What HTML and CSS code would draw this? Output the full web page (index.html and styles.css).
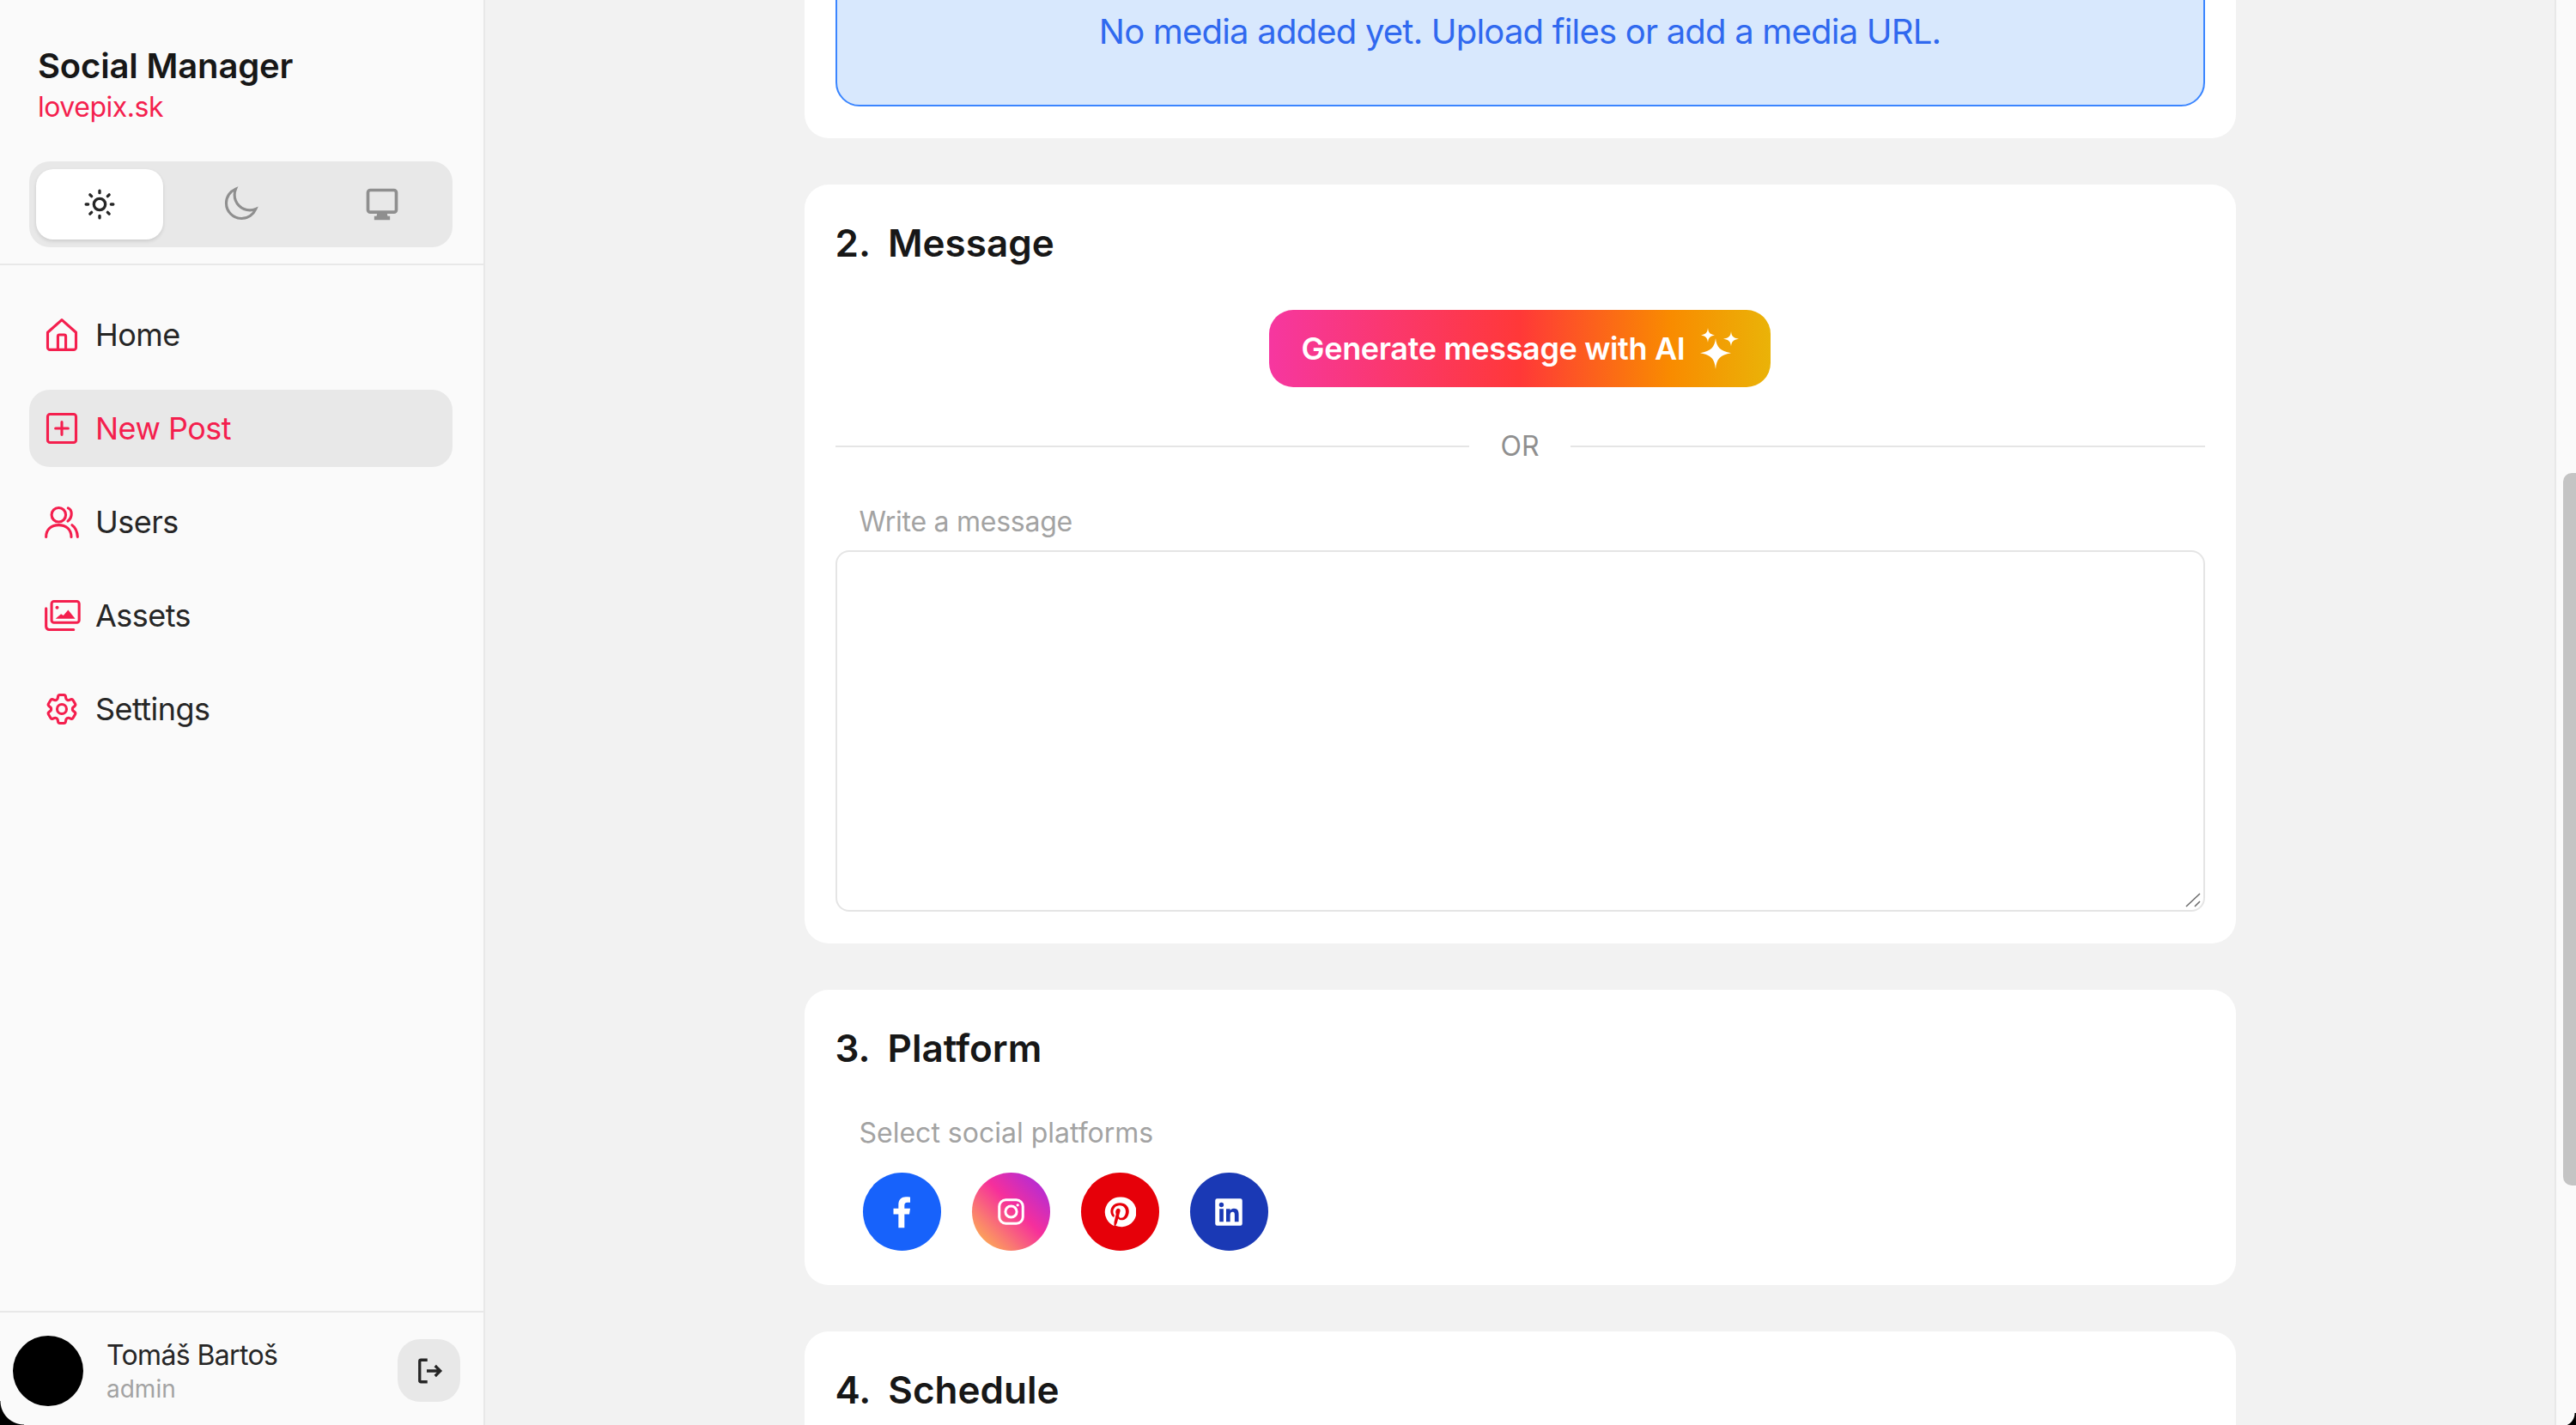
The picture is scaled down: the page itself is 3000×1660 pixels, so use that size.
FILE: index.html
```html
<!DOCTYPE html>
<html lang="en">
<head>
    <meta charset="UTF-8">
    <title>Social Manager</title>
    <link rel="stylesheet" href="styles.css">
</head>
<body>
    <div class="app">
        <!-- Sidebar -->
        <aside class="sidebar">
            <div class="brand">
                <div class="brand-name">Social Manager</div>
                <div class="brand-site">lovepix.sk</div>
            </div>
            <div class="theme-switch">
                <button class="theme-option active">
                    <svg viewBox="0 0 24 24" class="icon-theme"><circle cx="12" cy="12" r="4"/><path d="M12 2.500v1.500M12 20v1.500M2.500 12H4M20 12h1.500M5.300 5.300l1.100 1.100M17.600 17.600l1.100 1.100M5.300 18.700l1.100-1.100M17.600 6.400l1.100-1.100"/></svg>
                </button>
                <button class="theme-option">
                    <svg viewBox="0 0 24 24" class="icon-theme icon-moon"><path d="M21.752 15.002A9.72 9.72 0 0 1 18 15.750c-5.385 0-9.750-4.365-9.750-9.750 0-1.330.266-2.597.748-3.752A9.753 9.753 0 0 0 3 11.250C3 16.635 7.365 21 12.750 21a9.753 9.753 0 0 0 9.002-5.998z"/></svg>
                </button>
                <button class="theme-option">
                    <svg viewBox="0 0 24 24" class="icon-theme icon-screen"><rect x="3" y="3" width="18" height="14" rx="1.500"/><path class="solid" d="M9 17h6l.5 2.500h1.500V22H7v-2.500h1.500z"/></svg>
                </button>
            </div>
            <nav class="nav">
                <a class="nav-item">
                    <svg viewBox="0 0 24 24" class="icon-nav"><path d="M3 10.500L12 2.500l9 8V20a1.500 1.500 0 0 1-1.500 1.500h-15A1.500 1.500 0 0 1 3 20z"/><path d="M9.500 21.500V13a1 1 0 0 1 1-1h3a1 1 0 0 1 1 1v8.500"/></svg>
                    <span>Home</span>
                </a>
                <a class="nav-item active">
                    <svg viewBox="0 0 24 24" class="icon-nav"><rect x="3" y="3" width="18" height="18" rx="1.500"/><path d="M12 8v8M8 12h8"/></svg>
                    <span>New Post</span>
                </a>
                <a class="nav-item">
                    <svg viewBox="0 0 24 24" class="icon-nav"><circle cx="10" cy="7.500" r="4.500"/><path d="M2 21.500c0-5 3.500-7.500 8-7.500s8 2.500 8 7.500"/><path d="M16 3.200c2.500 1 3.200 5.500-.2 8.300M18.500 14c2.200 1.500 3.300 4 3.500 7.500"/></svg>
                    <span>Users</span>
                </a>
                <a class="nav-item">
                    <svg viewBox="0 0 24 24" class="icon-nav"><rect x="5.500" y="3" width="17.500" height="13.500" rx="1.500"/><path d="M2 7.500V19a2 2 0 0 0 2 2h15.500"/><circle class="solid" cx="9" cy="7" r="1.100"/><path class="solid" d="M8 14l3.500-3 1.500 1 3-3.500 4.500 5.500z"/></svg>
                    <span>Assets</span>
                </a>
                <a class="nav-item">
                    <svg viewBox="0 0 24 24" class="icon-nav"><path d="M9.594 3.940c.09-.542.56-.94 1.110-.94h2.593c.55 0 1.020.398 1.110.94l.213 1.281c.063.374.313.686.645.870.074.04.147.083.22.127.325.196.72.257 1.075.124l1.217-.456a1.125 1.125 0 0 1 1.370.49l1.296 2.247a1.125 1.125 0 0 1-.26 1.431l-1.003.827c-.293.241-.438.613-.43.992a7.723 7.723 0 0 1 0 .255c-.008.378.137.75.43.991l1.004.827c.424.35.534.955.26 1.430l-1.298 2.247a1.125 1.125 0 0 1-1.369.491l-1.217-.456c-.355-.133-.75-.072-1.076.124a6.470 6.470 0 0 1-.22.128c-.331.183-.581.495-.644.869l-.213 1.281c-.09.543-.56.94-1.110.94h-2.594c-.55 0-1.019-.398-1.110-.94l-.213-1.281c-.062-.374-.312-.686-.644-.870a6.520 6.520 0 0 1-.22-.127c-.325-.196-.72-.257-1.076-.124l-1.217.456a1.125 1.125 0 0 1-1.369-.49l-1.297-2.247a1.125 1.125 0 0 1 .26-1.431l1.004-.827c.292-.24.437-.613.43-.991a6.932 6.932 0 0 1 0-.255c.007-.38-.138-.751-.43-.992l-1.004-.827a1.125 1.125 0 0 1-.26-1.430l1.297-2.247a1.125 1.125 0 0 1 1.370-.491l1.216.456c.356.133.751.072 1.076-.124.072-.044.146-.086.22-.128.332-.183.582-.495.644-.869z"/><circle cx="12" cy="12" r="3"/></svg>
                    <span>Settings</span>
                </a>
            </nav>
            <div class="user-box">
                <div class="avatar"></div>
                <div class="user-info">
                    <div class="user-name">Tomáš Bartoš</div>
                    <div class="user-role">admin</div>
                </div>
                <button class="logout">
                    <svg viewBox="0 0 24 24" class="icon-logout"><path d="M10.500 3.500H5.500a1 1 0 0 0-1 1v15a1 1 0 0 0 1 1h5M10 12h10.500M16.500 8l4 4-4 4"/></svg>
                </button>
            </div>
        </aside>

        <!-- Form column -->
        <main class="main">
            <div class="column">
                <section class="card card-media">
                    <div class="media-empty">No media added yet. Upload files or add a media URL.</div>
                </section>

                <section class="card">
                    <h2 class="card-title"><span>2.</span><span>Message</span></h2>
                    <div class="ai-row">
                        <button class="ai-button">
                            Generate message with AI
                            <svg viewBox="0 0 24 24" class="icon-sparkles"><path d="M10 6c.6 5.300 2.600 7.400 9 8.600-6.400 1.200-8.400 3.300-9 9.400-.6-6.100-2.600-8.200-9-9.400 6.400-1.200 8.400-3.300 9-8.600z"/><path d="M5.500 0c.3 2.700 1.100 3.600 4 4.200-2.900.6-3.700 1.500-4 4.300-.3-2.800-1.100-3.700-4-4.300 2.900-.6 3.700-1.500 4-4.200z"/><path d="M19 2c.3 2.900 1.200 3.800 4.500 4.400-3.300.6-4.200 1.500-4.500 4.400-.3-2.900-1.200-3.800-4.500-4.400 3.300-.6 4.200-1.500 4.500-4.400z"/></svg>
                        </button>
                    </div>
                    <div class="or-line"><span>OR</span></div>
                    <label class="field-label">Write a message</label>
                    <div class="message-box">
                        <textarea class="message"></textarea>
                        <svg viewBox="0 0 20 20" class="grip"><path d="M1 17L17 2M11 17l6-6"/></svg>
                    </div>
                </section>

                <section class="card">
                    <h2 class="card-title"><span>3.</span><span>Platform</span></h2>
                    <label class="field-label label-platform">Select social platforms</label>
                    <div class="platforms">
                        <div class="platform fb">
                            <svg viewBox="0 0 24 24"><path class="solid" d="M14 23v-9.500h3.400l.6-4h-4V7.200c0-1.200.5-2 2.100-2H18V1.500C17.400 1.400 16.200 1.300 15 1.300c-3 0-5.200 1.800-5.200 5.400v2.800H6.300v4h3.500V23z"/></svg>
                        </div>
                        <div class="platform ig">
                            <svg viewBox="0 0 24 24"><rect x="2" y="2" width="20" height="20" rx="5.500"/><circle cx="12" cy="12" r="4.800"/><circle class="solid" cx="17.600" cy="6.400" r="1.200"/></svg>
                        </div>
                        <div class="platform pin">
                            <svg viewBox="0 0 24 24"><path class="solid" fill-rule="evenodd" d="M12 1a11 11 0 0 0-4 21.200c-.1-.9-.2-2.200 0-3.200l1.300-5.500s-.3-.7-.3-1.600c0-1.500.9-2.600 2-2.600.9 0 1.400.7 1.400 1.500 0 .9-.6 2.300-.9 3.600-.3 1 .5 1.900 1.600 1.900 1.900 0 3.300-2 3.300-4.900 0-2.500-1.800-4.300-4.400-4.300-3 0-4.800 2.300-4.800 4.600 0 .9.300 1.900.8 2.400.1.100.1.200.1.300l-.3 1.200c0 .2-.2.200-.4.100-1.300-.6-2.100-2.500-2.100-4.100 0-3.300 2.400-6.400 7-6.400 3.700 0 6.500 2.600 6.500 6.100 0 3.700-2.300 6.600-5.500 6.600-1.100 0-2.100-.6-2.400-1.200l-.7 2.500c-.2.900-.9 2.100-1.300 2.800A11 11 0 1 0 12 1z"/></svg>
                        </div>
                        <div class="platform li">
                            <svg viewBox="0 0 24 24"><path class="solid" fill-rule="evenodd" d="M3 1.500h18A1.500 1.500 0 0 1 22.500 3v18a1.500 1.500 0 0 1-1.500 1.500H3A1.500 1.500 0 0 1 1.500 21V3A1.500 1.500 0 0 1 3 1.500zM4.800 9.500V19.500h3.100V9.500zM6.300 4.500a1.800 1.800 0 1 0 0 3.600 1.800 1.800 0 0 0 0-3.600zM10 9.500v10h3.100v-5c0-1.300.3-2.600 1.900-2.600s1.600 1.500 1.600 2.700v4.900h3.100v-5.500c0-2.700-.6-4.800-3.700-4.800-1.500 0-2.500.8-2.900 1.600V9.500z"/></svg>
                        </div>
                    </div>
                </section>

                <section class="card card-last">
                    <h2 class="card-title"><span>4.</span><span>Schedule</span></h2>
                </section>
            </div>
        </main>

        <!-- Scroll track -->
        <div class="scroll-track"><div class="scroll-thumb"></div></div>
    </div>
    <div class="corner corner-left"></div>
    <div class="corner corner-right"></div>
</body>
</html>
```

FILE: styles.css
```css
* {
    box-sizing: border-box;
}

body {
    margin: 0;
    font-family: Inter, "Noto Sans", sans-serif;
    background-color: #f2f2f2;
    color: #171717;
}

.app {
    display: flex;
    height: 1660px;
    overflow: hidden;
}

/* Sidebar */
.sidebar {
    width: 565px;
    flex-shrink: 0;
    display: flex;
    flex-direction: column;
    background-color: #fafafa;
    border-right: 2px solid #e8e8e8;
}

.brand {
    padding: 50px 44px 0;
}

.brand-name {
    font-size: 40px;
    line-height: 54px;
    font-weight: 600;
    letter-spacing: -0.004em;
    color: #171717;
}

.brand-site {
    font-size: 32px;
    line-height: 42px;
    letter-spacing: -0.015em;
    color: #f41f4e;
}

.theme-switch {
    display: flex;
    gap: 16px;
    margin: 42px 36px 0 34px;
    padding: 9px 8px;
    height: 100px;
    background-color: #e8e8e8;
    border-radius: 24px;
}

.theme-option {
    flex: 1;
    display: flex;
    align-items: center;
    justify-content: center;
    border: none;
    border-radius: 20px;
    background: transparent;
    color: #8f8f8f;
    padding: 0;
}

.theme-option.active {
    background-color: #fff;
    color: #262626;
    box-shadow: 0 2px 4px rgba(0, 0, 0, 0.12);
}

.icon-theme {
    width: 40px;
    height: 40px;
    fill: none;
    stroke: currentColor;
    stroke-width: 2;
    stroke-linecap: round;
}

.icon-moon {
    width: 44px;
    height: 44px;
    stroke-width: 1.700;
}

.icon-screen {
    width: 44px;
    height: 44px;
    stroke-width: 2;
}

.nav {
    display: flex;
    flex-direction: column;
    gap: 19px;
    flex: 1;
    margin-top: 19px;
    padding: 36px 36px 0 34px;
    border-top: 2px solid #e8e8e8;
}

.nav-item {
    display: flex;
    align-items: center;
    gap: 17px;
    height: 90px;
    padding: 0 16px;
    border-radius: 24px;
    font-size: 36px;
    letter-spacing: -0.015em;
    color: #262626;
}

.nav-item.active {
    background-color: #e8e8e8;
    color: #f41f4e;
}

.icon-nav {
    width: 44px;
    height: 44px;
    flex-shrink: 0;
    fill: none;
    stroke: #f41f4e;
    stroke-width: 1.700;
    stroke-linecap: round;
    stroke-linejoin: round;
}

.solid {
    fill: currentColor;
    stroke: none;
}

.icon-nav .solid {
    fill: #f41f4e;
}

.user-box {
    display: flex;
    align-items: center;
    height: 133px;
    padding: 4px 27px 0 15px;
    border-top: 2px solid #e8e8e8;
}

.avatar {
    width: 82px;
    height: 82px;
    border-radius: 50%;
    background-color: #000;
}

.user-info {
    flex: 1;
    margin-left: 27px;
}

.user-name {
    font-size: 32px;
    line-height: 42px;
    letter-spacing: -0.02em;
    color: #262626;
}

.user-role {
    font-size: 28px;
    line-height: 36px;
    color: #a3a3a3;
}

.logout {
    width: 73px;
    height: 73px;
    display: flex;
    align-items: center;
    justify-content: center;
    border: none;
    border-radius: 26px;
    background-color: #e8e8e8;
    color: #262626;
    padding: 0;
}

.icon-logout {
    width: 36px;
    height: 36px;
    fill: none;
    stroke: currentColor;
    stroke-width: 2.200;
}

/* Form column */
.main {
    flex: 1;
    overflow: hidden;
}

.column {
    width: 1667px;
    margin: -88px auto 0;
    display: flex;
    flex-direction: column;
    gap: 54px;
}

.card {
    padding: 36px 36px 37px;
    background-color: #fff;
    border-radius: 28px;
}

.card-last {
    height: 300px;
}

.media-empty {
    height: 176px;
    display: flex;
    align-items: center;
    justify-content: center;
    background-color: #d8e8fd;
    border: 2px solid #3a85ff;
    border-radius: 28px;
    font-size: 40px;
    letter-spacing: -0.02em;
    color: #3069ef;
}

.card-title {
    display: flex;
    gap: 20px;
    margin: 2px 0 0;
    font-size: 44px;
    line-height: 60px;
    font-weight: 600;
    color: #171717;
}

.ai-row {
    display: flex;
    justify-content: center;
    margin-top: 48px;
}

.ai-button {
    display: flex;
    align-items: center;
    gap: 16px;
    height: 90px;
    padding: 0 36px 0 38px;
    border: none;
    border-radius: 28px;
    font-family: inherit;
    font-size: 36px;
    font-weight: 600;
    letter-spacing: -0.01em;
    color: #fff;
    background: linear-gradient(90deg, #f637a0 0%, #ff3838 50%, #f98b00 80%, #eab308 100%);
}

.icon-sparkles {
    width: 48px;
    height: 48px;
    fill: #fff;
}

.or-line {
    display: flex;
    align-items: center;
    gap: 36px;
    margin-top: 46px;
    font-size: 32px;
    line-height: 46px;
    color: #8f8f8f;
}

.or-line::before,
.or-line::after {
    content: "";
    flex: 1;
    height: 2px;
    background-color: #e5e5e5;
}

.field-label {
    display: block;
    margin-top: 43px;
    padding-left: 28px;
    font-size: 32px;
    line-height: 44px;
    letter-spacing: -0.008em;
    color: #a3a3a3;
}

.label-platform {
    margin-top: 47px;
    letter-spacing: 0;
}

.message-box {
    position: relative;
    margin-top: 11px;
}

.message {
    display: block;
    width: 100%;
    height: 421px;
    border: 2px solid #e5e5e5;
    border-radius: 16px;
    background-color: #fff;
    resize: none;
}

.grip {
    position: absolute;
    right: 3px;
    bottom: 3px;
    width: 20px;
    height: 20px;
    fill: none;
    stroke: #6e6e6e;
    stroke-width: 1.600;
}

.platforms {
    display: flex;
    gap: 36px;
    margin: 24px 0 3px;
    padding-left: 32px;
}

.platform {
    width: 91px;
    height: 91px;
    display: flex;
    align-items: center;
    justify-content: center;
    border-radius: 50%;
    color: #fff;
}

.platform svg {
    width: 36px;
    height: 36px;
    fill: none;
    stroke: currentColor;
    stroke-width: 2;
}

.fb svg {
    width: 40px;
    height: 40px;
}

.ig svg {
    width: 33px;
    height: 33px;
    stroke-width: 2.200;
}

.pin svg {
    width: 38px;
    height: 38px;
}

.fb {
    background-color: #1762fb;
}

.ig {
    background: linear-gradient(45deg, #fdba4d 5%, #f62f9b 55%, #a72be0 95%);
}

.pin {
    background-color: #e60009;
}

.li {
    background-color: #1a39b5;
}

/* Scroll track */
.scroll-track {
    width: 25px;
    flex-shrink: 0;
    padding: 551px 0 0 8px;
    background-color: #fafafa;
    border-left: 2px solid #e8e8e8;
}

.scroll-thumb {
    height: 830px;
    background-color: #c4c4c4;
    border-radius: 10px 0 0 10px;
}

/* Rounded window corners */
.corner {
    position: fixed;
    bottom: 0;
}

.corner-left {
    left: 0;
    width: 28px;
    height: 28px;
    background: radial-gradient(circle at 100% 0, transparent 27px, #000 28px);
}

.corner-right {
    right: 0;
    width: 17px;
    height: 14px;
    background: radial-gradient(circle at 0 0, transparent 15px, #000 16px);
}
```
